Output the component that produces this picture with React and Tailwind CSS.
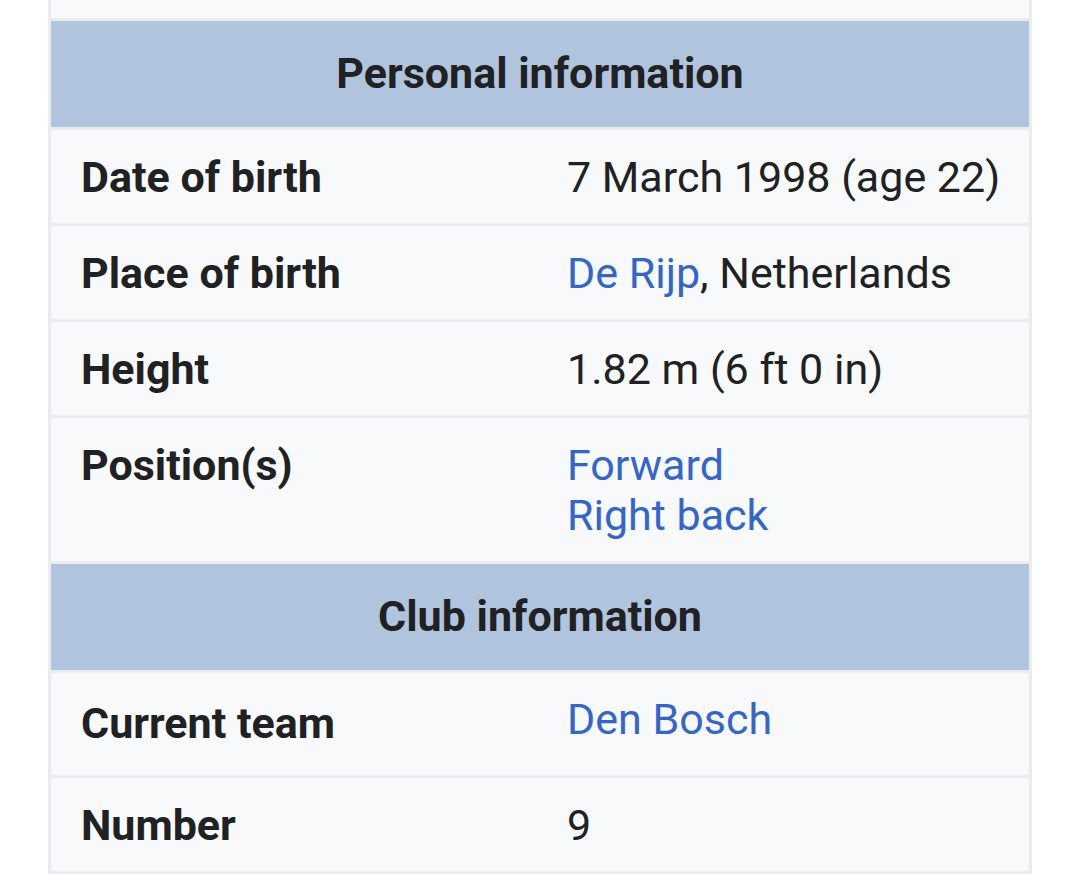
import React from "react";

const rows1 = [
  { label: "Date of birth", value: <span>7 March 1998 (age 22)</span> },
  {
    label: "Place of birth",
    value: (
      <span>
        <a className="text-[#3366cc]">De Rijp</a>, Netherlands
      </span>
    ),
  },
  { label: "Height", value: <span>1.82 m (6 ft 0 in)</span> },
  {
    label: "Position(s)",
    value: (
      <span className="flex flex-col">
        <a className="text-[#3366cc]">Forward</a>
        <a className="text-[#3366cc]">Right back</a>
      </span>
    ),
  },
];

const Header = ({ title }) => (
  <div className="bg-[#b0c4de] pt-[27px] pb-[29px] text-center font-bold">
    {title}
  </div>
);

const Row = ({ label, value, tall }) => (
  <div
    className={
      "grid grid-cols-[516px_1fr] bg-[#f8f9fa] " +
      (tall ? "pt-[21px] pb-[27px]" : "pt-[22px] pb-[21px]")
    }
  >
    <div className={"pl-[30px] font-bold " + (tall ? "pt-[4px]" : "")}>
      {label}
    </div>
    <div>{value}</div>
  </div>
);

export default function App() {
  return (
    <div className="w-[1079px] h-[874px] overflow-hidden bg-white font-['Roboto',sans-serif] text-[43px] leading-[50px] text-[#202122]">
      <div className="ml-[48px] w-[984px] h-[874px] bg-[#eaecf0] px-[3px] flex flex-col gap-[3px]">
        <div className="h-[18px] shrink-0 bg-[#f8f9fa]" />
        <Header title="Personal information" />
        {rows1.map((r) => (
          <Row key={r.label} label={r.label} value={r.value} />
        ))}
        <Header title="Club information" />
        <Row
          label="Current team"
          value={<a className="text-[#3366cc]">Den Bosch</a>}
          tall
        />
        <Row label="Number" value={<span>9</span>} />
      </div>
    </div>
  );
}
